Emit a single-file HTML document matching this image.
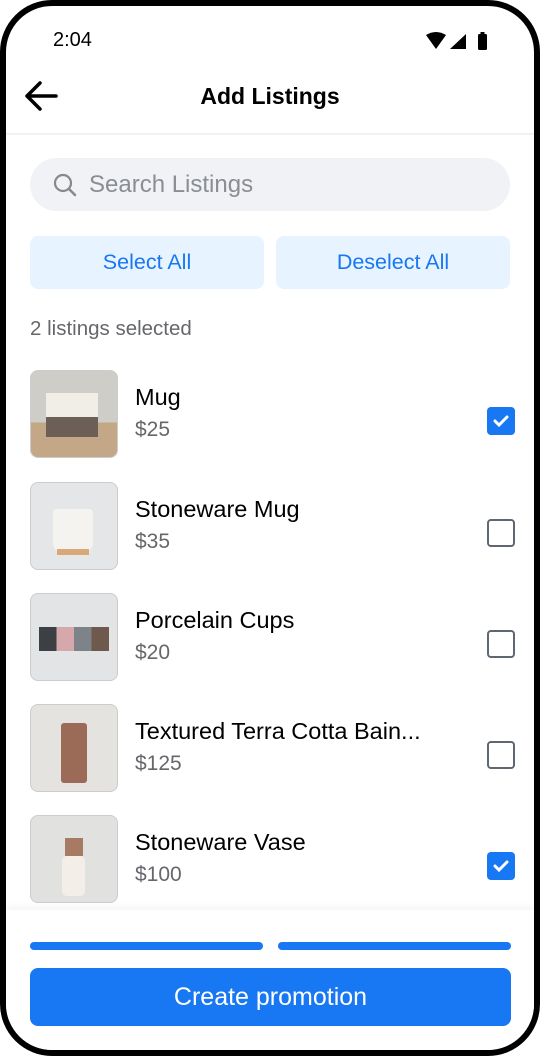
<!DOCTYPE html>
<html><head><style>
*{margin:0;padding:0;box-sizing:border-box}
body{width:540px;height:1056px;background:#fff;font-family:"Liberation Sans",Roboto,sans-serif;position:relative;overflow:hidden}
.frame{position:absolute;left:0;top:0;width:540px;height:1056px;border:6px solid #000;border-radius:52px;overflow:hidden;background:#fff}
.abs{position:absolute}
.row{position:absolute;left:24px;width:504px;height:88px}
.img{position:absolute;left:0;top:0;width:88px;height:88px;border-radius:8px;border:1px solid #ccc;overflow:hidden}
.t{position:absolute;left:105px;top:14px;font-size:23.5px;color:#000;white-space:nowrap}
.p{position:absolute;left:105px;top:48px;font-size:21px;color:#65676b}
.cb{position:absolute;left:457px;top:37px;width:28px;height:28px;border-radius:4px}
.off{border:2px solid #606770}
.on{background:#1877f2}
</style></head><body>
<div class="frame">
<div class="abs" style="left:47px;top:23px;font-size:20px;color:#000">2:04</div>
<svg class="abs" style="left:416px;top:26px" width="80" height="20" viewBox="0 0 80 20">
<path d="M4 3 Q14 -3 24 3 L14 17Z" fill="#000"/>
<path d="M28 17 L44 17 L44 2Z" fill="#000"/>
<rect x="56" y="2" width="9" height="16" rx="1.5" fill="#000"/>
<rect x="58.5" y="0" width="4" height="3" fill="#000"/>
</svg>
<svg class="abs" style="left:18px;top:74px" width="36" height="32" viewBox="0 0 36 32"><path d="M32 16 H4 M16 3 L3 16 L16 29" stroke="#000" stroke-width="3.5" fill="none" stroke-linecap="round" stroke-linejoin="round"/></svg>
<div class="abs" style="left:0;width:528px;top:77px;text-align:center;font-size:23px;font-weight:bold">Add Listings</div>
<div class="abs" style="left:0;top:127px;width:528px;height:2px;background:#f0f2f5"></div>
<div class="abs" style="left:24px;top:152px;width:480px;height:53px;border-radius:27px;background:#f0f2f5"></div>
<svg class="abs" style="left:46px;top:166px" width="28" height="28" viewBox="0 0 28 28"><circle cx="11" cy="11" r="8" stroke="#888" stroke-width="2.2" fill="none"/><path d="M17 17 L23 23" stroke="#888" stroke-width="2.5" stroke-linecap="round"/></svg>
<div class="abs" style="left:83px;top:165px;font-size:24px;color:#8a8d91">Search Listings</div>
<div class="abs" style="left:24px;top:230px;width:234px;height:53px;border-radius:8px;background:#e7f3ff;color:#1877f2;font-size:21.5px;text-align:center;line-height:53px">Select All</div>
<div class="abs" style="left:270px;top:230px;width:234px;height:53px;border-radius:8px;background:#e7f3ff;color:#1877f2;font-size:21.5px;text-align:center;line-height:53px">Deselect All</div>
<div class="abs" style="left:24px;top:311px;font-size:20.5px;color:#65676b">2 listings selected</div>

<div class="row" style="top:364px"><div class="img" style="background:linear-gradient(#cfcdc8 0 60%,#c3a787 60%)"><div class="abs" style="left:15px;top:22px;width:52px;height:24px;background:#f1eee8"></div><div class="abs" style="left:15px;top:46px;width:52px;height:20px;background:#6b5f58"></div></div><div class="t">Mug</div><div class="p">$25</div><div class="cb on"><svg width="28" height="28"><path d="M8 14 L12 18 L20 10" stroke="#fff" stroke-width="3" fill="none" stroke-linecap="round"/></svg></div></div>

<div class="row" style="top:476px"><div class="img" style="background:#e4e6e8"><div class="abs" style="left:22px;top:26px;width:40px;height:44px;border-radius:4px 4px 10px 10px;background:#f5f3f0"></div><div class="abs" style="left:26px;top:66px;width:32px;height:6px;background:#d9a879"></div></div><div class="t">Stoneware Mug</div><div class="p">$35</div><div class="cb off"></div></div>

<div class="row" style="top:587px"><div class="img" style="background:#e3e4e5"><div class="abs" style="left:8px;top:33px;width:70px;height:24px;background:linear-gradient(90deg,#3c3f44 0 25%,#d5a8ab 25% 50%,#7d8388 50% 75%,#6d5a4c 75%)"></div></div><div class="t">Porcelain Cups</div><div class="p">$20</div><div class="cb off"></div></div>

<div class="row" style="top:698px"><div class="img" style="background:#e5e3df"><div class="abs" style="left:30px;top:18px;width:26px;height:60px;border-radius:3px;background:#9c6b58"></div></div><div class="t">Textured Terra Cotta Bain...</div><div class="p">$125</div><div class="cb off"></div></div>

<div class="row" style="top:809px"><div class="img" style="background:#e1e1df"><div class="abs" style="left:34px;top:22px;width:18px;height:18px;background:#a77b63"></div><div class="abs" style="left:31px;top:40px;width:23px;height:40px;border-radius:5px;background:#f3efe8"></div></div><div class="t">Stoneware Vase</div><div class="p">$100</div><div class="cb on"><svg width="28" height="28"><path d="M8 14 L12 18 L20 10" stroke="#fff" stroke-width="3" fill="none" stroke-linecap="round"/></svg></div></div>

<div class="abs" style="left:0;top:904px;width:528px;height:146px;background:#fff;box-shadow:0 -4px 6px rgba(0,0,0,0.04)"></div>
<div class="abs" style="left:24px;top:936px;width:233px;height:8px;border-radius:4px;background:#1877f2"></div>
<div class="abs" style="left:272px;top:936px;width:233px;height:8px;border-radius:4px;background:#1877f2"></div>
<div class="abs" style="left:24px;top:962px;width:481px;height:58px;border-radius:8px;background:#1877f2;color:#fff;font-size:25px;text-align:center;line-height:58px">Create promotion</div>
</div>
</body></html>
